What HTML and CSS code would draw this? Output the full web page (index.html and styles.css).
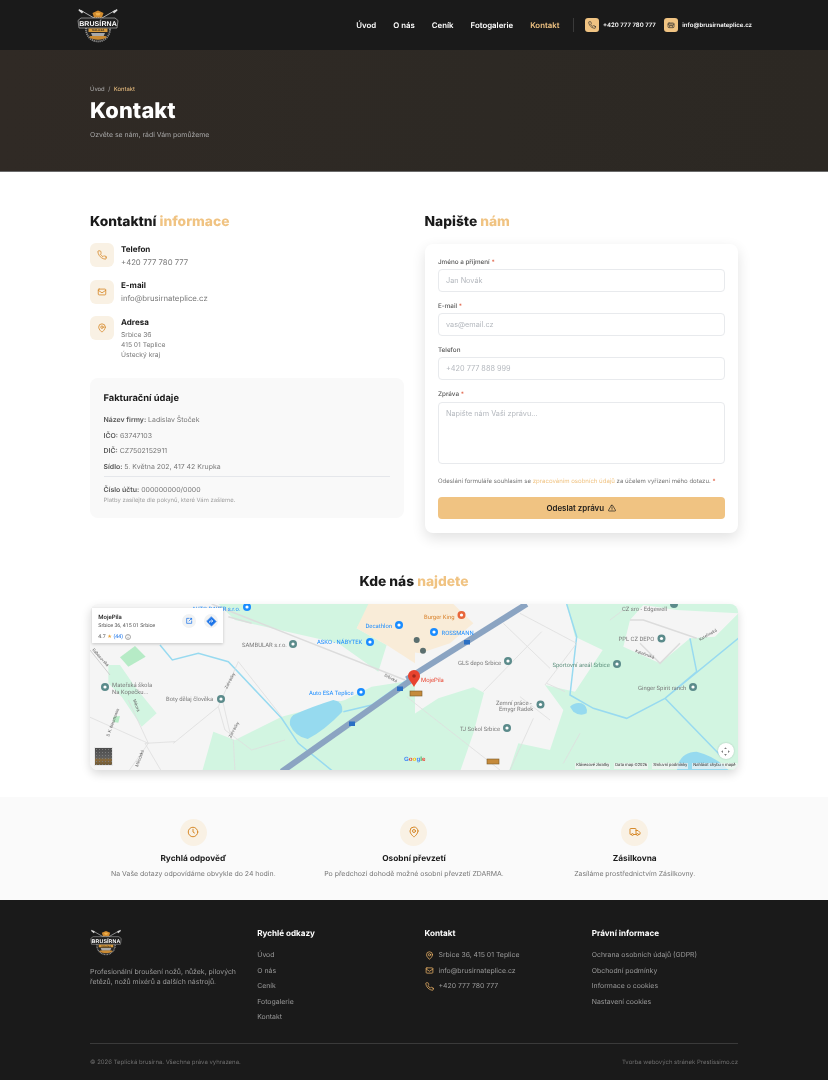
FILE: index.html
```html
<!DOCTYPE html>
<html lang="cs">
<head>
<meta charset="utf-8">
<title>Kontakt</title>
<link rel="stylesheet" href="styles.css">
</head>
<body>
<svg class="defs" width="0" height="0" aria-hidden="true">
  <symbol id="i-phone" viewBox="0 0 24 24"><path d="M22 16.92v3a2 2 0 0 1-2.18 2 19.79 19.79 0 0 1-8.63-3.07 19.5 19.5 0 0 1-6-6 19.79 19.79 0 0 1-3.07-8.67A2 2 0 0 1 4.11 2h3a2 2 0 0 1 2 1.72 12.84 12.84 0 0 0 .7 2.81 2 2 0 0 1-.45 2.11L8.09 9.91a16 16 0 0 0 6 6l1.27-1.27a2 2 0 0 1 2.11-.45 12.84 12.84 0 0 0 2.81.7A2 2 0 0 1 22 16.92z"/></symbol>
  <symbol id="i-mail" viewBox="0 0 24 24"><rect x="3" y="5" width="18" height="14" rx="2"/><path d="M3 8l9 6 9-6"/></symbol>
  <symbol id="i-mailopen" viewBox="0 0 24 24"><rect x="3" y="6" width="18" height="14" rx="3"/><path d="M3 10l6 4h6l6-4M9 14l-2 4M15 14l2 4M8 9h8"/></symbol>
  <symbol id="i-pin" viewBox="0 0 24 24"><path d="M20 10c0 6-8 12-8 12s-8-6-8-12a8 8 0 0 1 16 0z"/><circle cx="12" cy="10" r="3"/></symbol>
  <symbol id="i-clock" viewBox="0 0 24 24"><circle cx="12" cy="12" r="9.5"/><path d="M12 6.5V12l3 2"/></symbol>
  <symbol id="i-truck" viewBox="0 0 24 24"><path d="M14 17V6a1 1 0 0 0-1-1H3a1 1 0 0 0-1 1v10a1 1 0 0 0 1 1h2M15 17H9M14 9h4l4 4v3a1 1 0 0 1-1 1h-2"/><circle cx="7" cy="17" r="2"/><circle cx="17" cy="17" r="2"/></symbol>
  <symbol id="i-alert" viewBox="0 0 24 24"><path d="M10.3 3.9 1.8 18a2 2 0 0 0 1.7 3h17a2 2 0 0 0 1.7-3L13.7 3.9a2 2 0 0 0-3.4 0z"/><path d="M12 9v5M12 17.5v.1"/></symbol>
  <symbol id="logo-art" viewBox="0 0 84 72">
    <path d="M8 7 62 38M76 7 22 38" stroke="#bdbdbd" stroke-width="1.800" fill="none"/>
    <path d="M4 4l9 5-3 4-7-6zM80 4l-9 5 3 4 7-6z" fill="#d8d8d8"/>
    <circle cx="42" cy="45" r="24" fill="#262626" stroke="#8f8f8f" stroke-width="3.500" stroke-dasharray="2.400 1.600"/>
    <path d="M31 12l11-5 11 5-3 9H34z" fill="#d08a2e"/>
    <path d="M37 12h10l-2 5h-6z" fill="#f0b24e"/>
    <path d="M28 52h28l-3 7H31z" fill="#a9a9a9"/>
    <path d="M24 60c8 7 28 7 36 0l-3-2H27z" fill="#c98a33"/>
    <path d="M2 27 8 22H76L82 27 80 42H4z" fill="#1f1f1f" stroke="#c9c9c9" stroke-width="1.200"/>
    <rect x="23" y="43" width="38" height="7" fill="#d89a3b"/>
  </symbol>
</svg>

<header class="topbar">
  <svg class="topbar-logo" viewBox="0 0 84 72">
    <use href="#logo-art"/>
    <text class="logo-main" x="42" y="38" text-anchor="middle">BRUSÍRNA</text>
    <text class="logo-sub" x="42" y="48.500" text-anchor="middle">TEPLICKÁ</text>
  </svg>
  <nav class="nav">
    <a class="nav-link">Úvod</a>
    <a class="nav-link">O nás</a>
    <a class="nav-link">Ceník</a>
    <a class="nav-link">Fotogalerie</a>
    <a class="nav-link nav-active">Kontakt</a>
  </nav>
  <span class="nav-sep"></span>
  <a class="nav-contact"><span class="nav-chip"><svg class="ic"><use href="#i-phone"/></svg></span>+420 777 780 777</a>
  <a class="nav-contact"><span class="nav-chip"><svg class="ic"><use href="#i-mailopen"/></svg></span>info@brusirnateplice.cz</a>
</header>

<section class="hero">
  <div class="crumbs"><span>Úvod</span><span class="crumb-sep">/</span><span class="crumb-now">Kontakt</span></div>
  <h1 class="hero-title">Kontakt</h1>
  <p class="hero-sub">Ozvěte se nám, rádi Vám pomůžeme</p>
</section>

<main class="content">
  <div class="columns">
    <div class="col">
      <h2 class="sec-title">Kontaktní <em>informace</em></h2>
      <div class="info-list">
        <div class="info">
          <span class="info-ic"><svg class="ic"><use href="#i-phone"/></svg></span>
          <div class="info-text"><h3 class="info-h">Telefon</h3><p class="info-v">+420 777 780 777</p></div>
        </div>
        <div class="info">
          <span class="info-ic"><svg class="ic"><use href="#i-mail"/></svg></span>
          <div class="info-text"><h3 class="info-h">E-mail</h3><p class="info-v">info@brusirnateplice.cz</p></div>
        </div>
        <div class="info">
          <span class="info-ic"><svg class="ic"><use href="#i-pin"/></svg></span>
          <div class="info-text"><h3 class="info-h">Adresa</h3><p class="info-a">Srbice 36<br>415 01 Teplice<br>Ústecký kraj</p></div>
        </div>
      </div>
      <div class="billing">
        <h3 class="bill-h">Fakturační údaje</h3>
        <p class="bill-row"><b>Název firmy:</b> Ladislav Štoček</p>
        <p class="bill-row"><b>IČO:</b> 63747103</p>
        <p class="bill-row"><b>DIČ:</b> CZ7502152911</p>
        <p class="bill-row"><b>Sídlo:</b> 5. Května 202, 417 42 Krupka</p>
        <hr class="bill-hr">
        <p class="bill-row bill-acc"><b>Číslo účtu:</b> 000000000/0000</p>
        <p class="bill-note">Platby zasílejte dle pokynů, které Vám zašleme.</p>
      </div>
    </div>
    <div class="col">
      <h2 class="sec-title">Napište <em>nám</em></h2>
      <form class="form-card">
        <label class="lab">Jméno a příjmení <i>*</i></label>
        <input class="field" placeholder="Jan Novák">
        <label class="lab">E-mail <i>*</i></label>
        <input class="field" placeholder="vas@email.cz">
        <label class="lab">Telefon</label>
        <input class="field" placeholder="+420 777 888 999">
        <label class="lab">Zpráva <i>*</i></label>
        <textarea class="field area" placeholder="Napište nám Vaši zprávu..."></textarea>
        <p class="consent">Odeslání formuláře souhlasím se <a>zpracováním osobních údajů</a> za účelem vyřízení mého dotazu. <i>*</i></p>
        <button class="send" type="button">Odeslat zprávu <svg class="ic"><use href="#i-alert"/></svg></button>
      </form>
    </div>
  </div>

  <h2 class="sec-title map-title">Kde nás <em>najdete</em></h2>
  <div class="map">
    <svg class="map-svg" viewBox="0 0 648 166" preserveAspectRatio="none">
      <rect width="648" height="166" fill="#f5f5f5"/>
      <g transform="translate(-5,-4) scale(.33333)">
        <path class="g" d="M400 12H860L815 85 905 135 880 215 760 130 450 60Z"/>
        <path class="g" d="M350 520 385 395 450 420 590 350 780 300 860 260 990 240V520Z"/>
        <path class="g" d="M70 195 105 195 150 260 215 340 170 380 110 290 70 250Z"/>
        <path d="M105 172 150 138 182 170 130 200Z" fill="#b6ebc6"/>
        <path d="M85 350 105 348 100 368 85 366Z" fill="#b6ebc6"/>
        <path class="b" d="M850 12H990V190L905 135 815 85Z"/>
        <path class="r" d="M225 135 262 180 340 160 430 185 590 355 640 430 745 515"/>
        <path class="r" d="M775 335 860 315 990 222"/>
        <path d="M625 345Q680 320 745 300Q775 305 772 335Q720 390 668 417Q630 410 615 375Q612 355 625 345Z" fill="#96daef"/>
        <path class="l" d="M380 12 960 240M430 50 500 70"/>
        <path class="l2" d="M400 320 460 185 590 350M400 320 420 390 500 450 600 420M265 430 400 320M270 425 180 430 230 515M0 345 190 430M130 300 190 430 130 515M410 290 440 420M445 420 450 515"/>
        <path d="M590 515 990 232" stroke="#8ba4c2" stroke-width="18" fill="none"/>
        <path class="l3" d="M15 150 75 225"/>
      </g>
      <g transform="translate(320,-4) scale(.33333)">
        <path class="g" d="M345 12H1000V520H295L325 430 420 450 460 330 405 255 495 275 578 150 495 110 470 12Z"/>
        <path class="w" d="M660 60 700 15 800 30 985 40 915 110 840 115 750 190 640 140Z"/>
        <path class="g" d="M0 350 85 295 190 262 222 278 190 400 150 515 0 515Z"/>
        <path class="b" d="M0 12H130L190 70 120 130 30 160 0 155Z"/>
        <path class="r" d="M470 12 500 110 480 285 550 325 650 355 765 295 985 115M765 295 930 465M765 295 860 215 840 115"/>
        <path d="M480 320Q495 305 515 310Q535 320 530 340Q510 350 490 335Z" fill="#96daef"/>
        <path d="M805 490Q820 455 860 455Q920 470 960 515H800Z" fill="#96daef"/>
        <path class="l" d="M660 60 700 60 860 115M690 130 750 190 810 130"/>
        <path class="l2" d="M280 70 420 205M330 40 500 130M220 275 395 95M410 250 465 275M500 130 405 255M330 290 420 360M300 510 370 355M40 330 270 510M-10 290 40 330M460 490 510 400M600 60 640 30"/>
        <path d="M-10 238 350 12" stroke="#8ba4c2" stroke-width="18" fill="none"/>
      </g>
      <g class="t-g">
        <text x="152" y="43">SAMBULAR s.r.o.</text>
        <text x="22" y="83">Mateřská škola</text>
        <text x="22" y="89.500">Na Kopečku...</text>
        <text x="76" y="97">Boty dělaj člověka</text>
        <text x="368" y="61">GLS depo Srbice</text>
        <text x="406" y="101">Zemní práce -</text>
        <text x="409" y="107">Emygr Radek</text>
        <text x="370" y="127">TJ Sokol Srbice</text>
        <text class="t-sport" x="462.500" y="63">Sportovní areál Srbice</text>
        <text x="548" y="85.500">Ginger Spirit ranch</text>
        <text x="528.500" y="37">PPL CZ DEPO</text>
        <text x="532" y="6.500">CZ sro - Edgewell</text>
      </g>
      <g class="t-b">
        <text x="102" y="6.500">AUTO BAYER s.r.o.</text>
        <text x="227" y="40">ASKO - NÁBYTEK</text>
        <text x="219" y="91">Auto ESA Teplice</text>
        <text x="275.500" y="23.500">Decathlon</text>
        <text x="351.500" y="31">ROSSMANN</text>
      </g>
      <text class="t-o" x="334" y="15">Burger King</text>
      <g>
        <circle cx="157" cy="3" r="4" fill="#1a8cff"/><circle cx="309" cy="21" r="4" fill="#1a8cff"/><circle cx="280" cy="38" r="4" fill="#1a8cff"/>
        <circle cx="271" cy="88" r="4" fill="#1a8cff"/><circle cx="344" cy="28" r="4" fill="#1a8cff"/>
        <circle cx="371.500" cy="11" r="4" fill="#e8663a"/><circle cx="203" cy="40" r="4" fill="#5b8b8b"/><circle cx="131" cy="95" r="4" fill="#5b8b8b"/>
        <circle cx="15" cy="83" r="4" fill="#5b8b8b"/><circle cx="418" cy="57" r="4" fill="#5b8b8b"/><circle cx="450.500" cy="100.500" r="4" fill="#5b8b8b"/>
        <circle cx="417" cy="124" r="4" fill="#5b8b8b"/><circle cx="527" cy="60" r="4" fill="#5b8b8b"/><circle cx="603" cy="83" r="4" fill="#5b8b8b"/><circle cx="571.500" cy="34.500" r="4" fill="#5b8b8b"/>
        <circle cx="584" cy="0" r="4" fill="#5b8b8b"/><circle cx="326.700" cy="36" r="3" fill="#5b6f6f"/><circle cx="333" cy="46.700" r="3" fill="#5b6f6f"/>
        <g fill="#fff"><circle cx="157" cy="3" r="1.600"/><circle cx="309" cy="21" r="1.600"/><circle cx="280" cy="38" r="1.600"/><circle cx="271" cy="88" r="1.600"/><circle cx="344" cy="28" r="1.600"/><circle cx="371.500" cy="11" r="1.600"/><circle cx="203" cy="40" r="1.600"/><circle cx="131" cy="95" r="1.600"/><circle cx="15" cy="83" r="1.600"/><circle cx="418" cy="57" r="1.600"/><circle cx="450.500" cy="100.500" r="1.600"/><circle cx="417" cy="124" r="1.600"/><circle cx="527" cy="60" r="1.600"/><circle cx="603" cy="83" r="1.600"/><circle cx="571.500" cy="34.500" r="1.600"/></g>
      </g>
      <rect x="307" y="82.500" width="6" height="4.500" fill="#2a6fc4"/><rect x="259" y="117.500" width="6" height="4.500" fill="#2a6fc4"/><rect x="374" y="36" width="6" height="4.500" fill="#2a6fc4"/>
      <rect x="320" y="87" width="12" height="5" fill="#c58a3b" stroke="#7a5a2a" stroke-width=".6"/>
      <rect x="397" y="155" width="12" height="5" fill="#c58a3b" stroke="#7a5a2a" stroke-width=".6"/>
      <path d="M324 83C321.500 78 318 75.500 318 72a6 6 0 0 1 12 0C330 75.500 326.500 78 324 83Z" fill="#e8432f"/>
      <circle cx="324" cy="72" r="1.800" fill="#a5281c"/>
      <text class="t-m" x="331" y="78">MojePila</text>
      <g class="t-r">
        <text transform="translate(2,46) rotate(48)">Rabasovská</text>
        <text transform="translate(43,96) rotate(70)">Mírová</text>
        <text transform="translate(19,133) rotate(-70)">S. K. Neumanna</text>
        <text transform="translate(137,85) rotate(-62)">Zahrádky</text>
        <text transform="translate(141,134) rotate(-62)">Zahrádky</text>
        <text transform="translate(294,72) rotate(28)">Srbická</text>
        <text transform="translate(545,48) rotate(20)">Kateřinská</text>
        <text transform="translate(610,37) rotate(-30)">Kateřinská</text>
        <text transform="translate(48,163) rotate(-70)">Mírodská</text>
      </g>
      <text class="t-google" x="314" y="156.500"><tspan fill="#4285f4">G</tspan><tspan fill="#ea4335">o</tspan><tspan fill="#fbbc05">o</tspan><tspan fill="#4285f4">g</tspan><tspan fill="#34a853">l</tspan><tspan fill="#ea4335">e</tspan></text>
    </svg>
    <div class="map-card">
      <div>
        <p class="mc-name">MojePila</p>
        <p class="mc-addr">Srbice 36, 415 01 Srbice</p>
        <p class="mc-rate">4.7 <span class="mc-star">★</span> <span class="mc-count">(44)</span> <svg class="mc-inf" viewBox="0 0 12 12"><circle cx="6" cy="6" r="5"/><path d="M6 5.500V9M6 3v1"/></svg></p>
      </div>
      <span class="mc-btn">
        <svg viewBox="0 0 24 24" class="ic"><path d="M11 4H5v15h15v-6M12 12 20 4M15 4h5v5"/></svg>
      </span>
      <span class="mc-btn mc-dir"><svg viewBox="0 0 24 24" class="ic"><path d="M12 2 22 12 12 22 2 12Z" fill="#1a73e8"/><path d="M8 14v-3h6M12 8.500l3 2.500-3 2.500" stroke="#fff"/></svg></span>
    </div>
    <div class="map-thumb"></div>
    <span class="map-full"><svg viewBox="0 0 24 24" class="ic"><path d="M12 3 9 6h6ZM12 21l-3-3h6ZM3 12l3-3v6ZM21 12l-3-3v6Z"/></svg></span>
    <div class="map-attr"><span>Klávesové zkratky</span><span>Data map ©2026</span><span>Smluvní podmínky</span><span>Nahlásit chybu v mapě</span></div>
  </div>
</main>

<section class="features">
  <div class="feature">
    <span class="f-ic"><svg class="ic"><use href="#i-clock"/></svg></span>
    <h3 class="f-h">Rychlá odpověď</h3>
    <p class="f-p">Na Vaše dotazy odpovídáme obvykle do 24 hodin.</p>
  </div>
  <div class="feature">
    <span class="f-ic"><svg class="ic"><use href="#i-pin"/></svg></span>
    <h3 class="f-h">Osobní převzetí</h3>
    <p class="f-p">Po předchozí dohodě možné osobní převzetí ZDARMA.</p>
  </div>
  <div class="feature">
    <span class="f-ic"><svg class="ic"><use href="#i-truck"/></svg></span>
    <h3 class="f-h">Zásilkovna</h3>
    <p class="f-p">Zasíláme prostřednictvím Zásilkovny.</p>
  </div>
</section>

<footer class="footer">
  <div class="foot-grid">
    <div>
      <svg class="foot-logo" viewBox="0 0 84 72">
        <use href="#logo-art"/>
        <text class="logo-main" x="42" y="38" text-anchor="middle">BRUSÍRNA</text>
        <text class="logo-sub" x="42" y="48.500" text-anchor="middle">TEPLICKÁ</text>
      </svg>
      <p class="foot-about">Profesionální broušení nožů, nůžek, pilových řetězů, nožů mixérů a dalších nástrojů.</p>
    </div>
    <div>
      <h4 class="foot-h">Rychlé odkazy</h4>
      <ul class="foot-list"><li>Úvod</li><li>O nás</li><li>Ceník</li><li>Fotogalerie</li><li>Kontakt</li></ul>
    </div>
    <div>
      <h4 class="foot-h">Kontakt</h4>
      <ul class="foot-list">
        <li class="foot-ic"><svg class="ic"><use href="#i-pin"/></svg>Srbice 36, 415 01 Teplice</li>
        <li class="foot-ic"><svg class="ic"><use href="#i-mail"/></svg>info@brusirnateplice.cz</li>
        <li class="foot-ic"><svg class="ic"><use href="#i-phone"/></svg>+420 777 780 777</li>
      </ul>
    </div>
    <div>
      <h4 class="foot-h">Právní informace</h4>
      <ul class="foot-list"><li>Ochrana osobních údajů (GDPR)</li><li>Obchodní podmínky</li><li>Informace o cookies</li><li>Nastavení cookies</li></ul>
    </div>
  </div>
  <div class="foot-bottom"><span>© 2026 Teplická brusírna. Všechna práva vyhrazena.</span><span>Tvorba webových stránek Prestissimo.cz</span></div>
</footer>
</body>
</html>
```
FILE: styles.css
```css
* { box-sizing: border-box; }
html, body { margin: 0; padding: 0; }
html { background: #fff; }
body { font-family: Inter, "Noto Sans", sans-serif; color: #1a1a1a; background: #fff; width: 828px; filter: blur(.3px); text-rendering: geometricPrecision; }
p, h1, h2, h3, h4, ul { margin: 0; padding: 0; }
ul { list-style: none; }
em { font-style: normal; color: #f0c382; }
i { font-style: normal; color: #e2694f; }
.defs { position: absolute; }
.ic { fill: none; stroke: currentColor; stroke-width: 2; stroke-linecap: round; stroke-linejoin: round; display: block; }

.logo-main { font: 700 14px "Liberation Sans", sans-serif; fill: #fff; letter-spacing: .2px; }
.logo-sub { font: 700 5px "Liberation Sans", sans-serif; fill: #1a1a1a; }

.topbar { height: 50px; background: #1a1a1a; display: flex; align-items: center; padding: 0 76px 0 77px; }
.topbar-logo { width: 42px; height: 36px; display: block; }
.nav { display: flex; gap: 17px; margin-left: auto; }
.nav-link { font-size: 7.850px; font-weight: 600; color: #fff; }
.nav-active { color: #f0c382; }
.nav-sep { width: 1px; height: 14px; background: #3a3a3a; margin: 0 10.500px 0 14px; }
.nav-contact { display: flex; align-items: center; gap: 4px; font-size: 6.020px; font-weight: 600; color: #fff; margin-right: 8.500px; }
.nav-contact:last-child { margin-right: 0; }
.nav-chip { width: 14px; height: 14px; border-radius: 3px; background: #f0c382; color: #2a2a2a; display: flex; align-items: center; justify-content: center; }
.nav-chip .ic { width: 8px; height: 8px; }

.hero { height: 122px; padding: 34px 90px 0; background-color: #2f2a25; background-image: radial-gradient(rgba(240,195,130,.05) .5px, transparent .7px), linear-gradient(90deg, #302a25, #2d2924 60%, #2c2823); background-size: 6px 6px, auto; border-bottom: 1px solid #6a6a6a; color: #fff; }
.crumbs { display: flex; gap: 3.500px; font-size: 5.900px; line-height: 10px; color: #b5b5b5; padding-top: .7px; }
.crumb-now { color: #f0c382; }
.hero-title { font-size: 21.800px; font-weight: 800; line-height: 28px; margin-top: 2.500px; letter-spacing: .1px; }
.hero-sub { font-size: 6.900px; line-height: 12px; color: #a8a8a8; margin-top: 4px; }

.content { padding: 41px 90px 27px; }
.columns { display: grid; grid-template-columns: 1fr 1fr; column-gap: 21px; }
.sec-title { font-size: 13.800px; font-weight: 800; line-height: 18px; color: #1a1a1a; }
.info-list { display: flex; flex-direction: column; gap: 12.500px; margin-top: 12px; }
.info { display: flex; gap: 7px; }
.info-text { padding-top: .7px; margin-bottom: -.7px; }
.info-ic { width: 24px; height: 24px; border-radius: 6px; background: #f9f1e4; color: #d78a2b; display: flex; align-items: center; justify-content: center; flex: none; }
.info-ic .ic { width: 10px; height: 10px; }
.info-h { font-size: 8px; font-weight: 700; line-height: 11px; color: #1a1a1a; }
.info-v { font-size: 7.750px; line-height: 11px; color: #777; margin-top: 2px; }
.info-a { font-size: 6.700px; line-height: 10.300px; color: #777; margin-top: 2px; }

.billing { background: #f9f9f9; border-radius: 8px; padding: 14.500px 13.500px 0; margin-top: 18px; height: 140px; }
.bill-h { font-size: 9.300px; font-weight: 700; line-height: 13px; margin-bottom: 9px; }
.bill-row { font-size: 6.950px; line-height: 11px; color: #777; margin-bottom: 4.500px; }
.bill-row b { color: #555; font-weight: 600; }
.bill-hr { border: 0; border-top: 1px solid #e5e7eb; margin: 0 0 7px; }
.bill-acc { font-size: 6.950px; margin-bottom: 0; }
.bill-note { font-size: 5.900px; line-height: 9px; color: #a0a0a0; margin-top: 1px; }

.form-card { background: #fff; border-radius: 8px; box-shadow: 0 5px 14px rgba(0,0,0,.12); margin-top: 13px; height: 289.300px; padding: 14px 13.500px 0; display: flex; flex-direction: column; }
.lab { font-size: 6.300px; font-weight: 500; line-height: 9px; color: #555; margin-bottom: 2.300px; }
.field { width: 100%; height: 22.400px; border: 1.200px solid #e8eaed; border-radius: 4px; background: #fff; padding: 0 7px; font: 7.300px Inter, sans-serif; margin-bottom: 10.400px; display: block; outline: 0; resize: none; flex: none; }
.field::placeholder { color: #b4b8be; opacity: 1; }
.area { height: 62.700px; padding: 6px 7px; margin-bottom: 12.900px; }
.consent { font-size: 6.050px; line-height: 9px; color: #777; white-space: nowrap; }
.consent a { color: #f0c382; }
.send { margin-top: 10.500px; height: 22.300px; border: 0; border-radius: 4px; background: #f0c382; color: #1a1a1a; font: 600 7.900px Inter, sans-serif; display: flex; align-items: center; justify-content: center; gap: 4px; width: 100%; padding: 0; flex: none; }
.send .ic { width: 8px; height: 8px; }

.map-title { text-align: center; margin-top: 40px; }
.map { position: relative; height: 166px; margin-top: 13px; border-radius: 8px; overflow: hidden; box-shadow: 0 4px 10px rgba(0,0,0,.15); }
.map-svg { width: 648px; height: 166px; display: block; }
.g { fill: #d2f5e1; }
.w { fill: #f5f5f5; }
.b { fill: #f9ecd8; }
.r { fill: none; stroke: #98daf0; stroke-width: 4.500; }
.l { fill: none; stroke: #dcdcdc; stroke-width: 4.500; }
.l2 { fill: none; stroke: #dedede; stroke-width: 2.500; }
.l3 { fill: none; stroke: #cfcfcf; stroke-width: 3; }
.t-g text { font: 5.900px Roboto, sans-serif; fill: #7a7a7a; }
.t-g .t-sport { fill: #5c8f7c; }
.t-b text { font: 5.900px Roboto, sans-serif; fill: #1a8cff; }
.t-o { font: 5.900px Roboto, sans-serif; fill: #d9822b; }
.t-r text { font: 4.200px Roboto, sans-serif; fill: #666; }
.t-m { font: 5.900px Roboto, sans-serif; fill: #e8432f; }
.t-google { font: 700 6.200px "Liberation Sans", sans-serif; }

.map-card { position: absolute; left: 2px; top: 4px; width: 131px; height: 35px; background: #fff; box-shadow: 0 1px 3px rgba(0,0,0,.2); padding: 5.500px 5px 0 6.300px; display: flex; align-items: flex-start; color: #444; font-family: Roboto, sans-serif; }
.map-card > div { flex: 1; }
.mc-name { font-size: 6px; font-weight: 500; line-height: 8px; color: #222; }
.mc-addr { font-size: 5.300px; line-height: 7px; margin-top: 1px; color: #555; }
.mc-rate { font-size: 5.300px; line-height: 8px; margin-top: 3px; color: #555; display: flex; align-items: center; gap: 1.500px; }
.mc-star { color: #e7a33a; }
.mc-count { color: #1a73e8; }
.mc-inf { width: 6px; height: 6px; fill: none; stroke: #555; stroke-width: 1; }
.mc-btn { width: 14px; height: 14px; border-radius: 50%; background: #f1f3f4; color: #1a73e8; display: flex; align-items: center; justify-content: center; margin-left: 8px; flex: none; margin-top: .5px; }
.mc-btn .ic { width: 8px; height: 8px; stroke-width: 2.200; }
.mc-dir .ic { width: 11px; height: 11px; stroke-width: 1.500; }
.map-thumb { position: absolute; left: 5px; bottom: 5px; width: 17px; height: 17px; background: radial-gradient(#7c7c7c .6px, transparent .9px) 0 0 / 3px 3px, linear-gradient(180deg, #4c4c4c 0%, #5e5e5e 55%, #8a6a3a 70%, #6c5a3a 100%); outline: 1px solid #e8e8e8; }
.map-full { position: absolute; right: 4.300px; bottom: 11.300px; width: 16px; height: 16px; border-radius: 50%; background: #fff; color: #555; display: flex; align-items: center; justify-content: center; box-shadow: 0 0 2px rgba(0,0,0,.2); }
.map-full .ic { width: 11px; height: 11px; fill: #555; stroke: none; }
.map-attr { position: absolute; right: 1.500px; bottom: 1px; display: flex; gap: 4px; font: 4.200px/6px Roboto, sans-serif; color: #333; }
.map-attr span { background: rgba(245,245,245,.7); padding: 0 1px; }

.features { height: 103px; background: #fafafa; padding: 21.500px 90px 0; display: grid; grid-template-columns: repeat(3, 1fr); column-gap: 14px; }
.feature { display: flex; flex-direction: column; align-items: center; }
.f-ic { width: 27px; height: 27px; border-radius: 50%; background: #f9f1e4; color: #d78a2b; display: flex; align-items: center; justify-content: center; }
.f-ic .ic { width: 12px; height: 12px; }
.f-h { font-size: 8.300px; font-weight: 700; line-height: 12px; margin-top: 7px; color: #1a1a1a; }
.f-p { font-size: 6.950px; line-height: 11px; color: #777; margin-top: 3px; white-space: nowrap; }

.footer { height: 180px; background: #1a1a1a; padding: 28px 90px 0; color: #9a9a9a; }
.foot-grid { display: grid; grid-template-columns: repeat(4, 1fr); column-gap: 21px; height: 115.300px; border-bottom: 1px solid #3a3a3a; }
.foot-logo { width: 32px; height: 28px; display: block; }
.foot-about { font-size: 6.950px; line-height: 10.300px; margin-top: 10.500px; color: #9a9a9a; }
.foot-h { font-size: 8.100px; font-weight: 700; line-height: 11px; color: #fff; margin-bottom: 6px; }
.foot-list li { font-size: 6.900px; line-height: 15.500px; color: #9a9a9a; }
.foot-list { margin-top: 8px; }
.foot-ic { display: flex; align-items: center; gap: 5px; color: #9a9a9a; }
.foot-ic .ic { width: 9px; height: 9px; color: #eeb468; flex: none; }
.foot-bottom { display: flex; justify-content: space-between; font-size: 6px; line-height: 9px; color: #6f6f6f; margin-top: 14px; }
```
